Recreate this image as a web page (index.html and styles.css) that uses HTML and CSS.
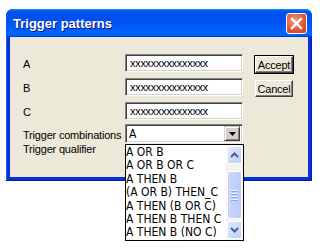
FILE: index.html
```
<!DOCTYPE html>
<html>
<head>
    <title>Trigger patterns</title>
    <link rel="stylesheet" href="styles.css">
</head>
<body>
    <div class="window">
        <div class="titlebar">
            <span class="title">Trigger patterns</span>
            <span class="close">
                <svg width="13" height="13" viewBox="0 0 13 13">
                    <path d="M2 2 L11 11 M11 2 L2 11" stroke="#fff" stroke-width="2.4" stroke-linecap="square"/>
                </svg>
            </span>
        </div>
        <div class="client">
            <div class="form">
                <div class="row">
                    <label>A</label>
                    <div class="field">xxxxxxxxxxxxxxx</div>
                </div>
                <div class="row">
                    <label>B</label>
                    <div class="field">xxxxxxxxxxxxxxx</div>
                </div>
                <div class="row">
                    <label>C</label>
                    <div class="field">xxxxxxxxxxxxxxx</div>
                </div>
                <div class="row row-combo">
                    <label>Trigger combinations</label>
                    <div class="combo">
                        <span class="combo-value">A</span>
                        <span class="combo-btn">
                            <svg width="7" height="4" viewBox="0 0 7 4"><path d="M0 0 H7 L3.5 4 Z" fill="#000"/></svg>
                        </span>
                        <div class="dropdown">
                            <ul class="items">
                                <li>A OR B</li>
                                <li>A OR B OR C</li>
                                <li>A THEN B</li>
                                <li>(A OR B) THEN_C</li>
                                <li>A THEN (B OR C)</li>
                                <li>A THEN B THEN C</li>
                                <li>A THEN B (NO C)</li>
                            </ul>
                            <div class="scrollbar">
                                <div class="sb-btn">
                                    <svg width="9" height="6" viewBox="0 0 9 6"><path d="M1 5 L4.5 1.5 L8 5" fill="none" stroke="#4d6185" stroke-width="2"/></svg>
                                </div>
                                <div class="sb-track">
                                    <div class="sb-thumb">
                                        <span class="grip"></span>
                                        <span class="grip"></span>
                                        <span class="grip"></span>
                                        <span class="grip"></span>
                                    </div>
                                </div>
                                <div class="sb-btn">
                                    <svg width="9" height="6" viewBox="0 0 9 6"><path d="M1 1 L4.5 4.5 L8 1" fill="none" stroke="#4d6185" stroke-width="2"/></svg>
                                </div>
                            </div>
                        </div>
                    </div>
                </div>
                <div class="row row-qualifier">
                    <label>Trigger qualifier</label>
                </div>
            </div>
            <div class="buttons">
                <button type="button" class="btn btn-default">Accept</button>
                <button type="button" class="btn">Cancel</button>
            </div>
        </div>
    </div>
</body>
</html>
```

FILE: styles.css
```
html, body {
    min-height: 100%;
}

body {
    margin: 0;
    min-height: 251px;
    background: #fff;
    font-family: "Liberation Sans", Arial, sans-serif;
    font-size: 11px;
    color: #000;
    overflow: visible;
}

.window {
    width: 306px;
    margin: 9px 0 0 6px;
    background: #0831d9;
    border-radius: 7px 7px 0 0;
    padding: 0 4px 4px 4px;
    box-sizing: border-box;
    box-shadow: inset -1px -1px #001ea0, inset 1px 0 #166aee;
}

.titlebar {
    height: 28px;
    margin: 0 -4px;
    padding: 0 5px 0 7px;
    display: flex;
    align-items: center;
    justify-content: space-between;
    border-radius: 7px 7px 0 0;
    background: linear-gradient(180deg, #0997ff, #0053ee 8%, #0050ee 40%, #0066ff 88%, #0066ff 93%, #005bff 95%, #003dd7 96%, #003dd7);
}

.title {
    color: #fff;
    font-weight: bold;
    font-size: 13px;
    text-shadow: 1px 1px #0f1089;
    padding-top: 1px;
}

.close {
    width: 19px;
    height: 19px;
    border: 1px solid #fff;
    border-radius: 3px;
    background: radial-gradient(circle at 40% 35%, #f0a080 0, #e15a34 55%, #c8401f 100%);
    display: flex;
    align-items: center;
    justify-content: center;
}

.client {
    height: 140px;
    background: #ece9d8;
    display: flex;
    padding: 17px 0 0 13px;
    box-sizing: border-box;
}

.form {
    width: 220px;
}

.row {
    display: flex;
    align-items: center;
    height: 18px;
    margin-bottom: 6px;
}

.row label {
    width: 102px;
    flex-shrink: 0;
    white-space: nowrap;
    letter-spacing: -0.2px;
    padding-top: 2px;
}

.row-combo {
    height: 19px;
    margin-top: -2px;
    margin-bottom: 0;
}

.row-qualifier {
    height: 12px;
    margin-top: -1px;
}

.field {
    width: 118px;
    height: 18px;
    box-sizing: border-box;
    background: #fff;
    border: 1px solid;
    border-color: #808080 #fff #fff #808080;
    box-shadow: inset 1px 1px #404040, inset -1px -1px #d4d0c8;
    padding: 3px 0 0 4px;
    line-height: 11px;
    letter-spacing: -0.3px;
}

.combo {
    position: relative;
    width: 118px;
    height: 19px;
    box-sizing: border-box;
    background: #fff;
    border: 1px solid;
    border-color: #808080 #fff #fff #808080;
    box-shadow: inset 1px 1px #404040, inset -1px -1px #d4d0c8;
    display: flex;
    align-items: center;
    justify-content: space-between;
    padding: 2px 2px 2px 3px;
}

.combo-value {
    font-family: "Liberation Sans Narrow", "DejaVu Sans Condensed", "Liberation Sans", sans-serif;
    font-size: 12px;
}

.combo-btn {
    width: 16px;
    height: 15px;
    box-sizing: border-box;
    background: #d4d0c8;
    border: 1px solid;
    border-color: #d4d0c8 #404040 #404040 #d4d0c8;
    box-shadow: inset 1px 1px #fff, inset -1px -1px #808080;
    display: flex;
    align-items: center;
    justify-content: center;
}

.dropdown {
    position: absolute;
    z-index: 5;
    top: 19px;
    left: -1px;
    width: 119px;
    height: 97px;
    box-sizing: border-box;
    background: #fff;
    border: 1px solid #000;
    display: flex;
}

.items {
    flex: 1;
    list-style: none;
    margin: 0;
    padding: 1px 0 0 0;
    font-family: "Liberation Sans Narrow", "DejaVu Sans Condensed", "Liberation Sans", sans-serif;
    font-size: 12px;
    line-height: 13.4px;
    white-space: nowrap;
}

.scrollbar {
    width: 17px;
    display: flex;
    flex-direction: column;
    background: #f4f3ee;
    padding: 1px 0 1px 0;
}

.sb-btn {
    height: 16px;
    margin: 0 1px;
    border: 1px solid #fff;
    border-radius: 2px;
    background: linear-gradient(135deg, #e0e9fd, #bccefa);
    display: flex;
    align-items: center;
    justify-content: center;
}

.sb-track {
    flex: 1;
    padding: 7px 0 2px 0;
    display: flex;
}

.sb-thumb {
    flex: 1;
    margin: 0 1px;
    border: 1px solid #fff;
    border-radius: 2px;
    background: linear-gradient(90deg, #c9d8fc, #b8cbf9);
    display: flex;
    flex-direction: column;
    align-items: center;
    justify-content: center;
    gap: 1px;
}

.grip {
    width: 7px;
    height: 1px;
    background: #eef3fe;
    border-bottom: 1px solid #8ca6e6;
}

.buttons {
    display: flex;
    flex-direction: column;
    gap: 7px;
    margin-left: 12px;
    padding-top: 2px;
}

.btn {
    width: 38px;
    height: 17px;
    padding: 0;
    font-family: "Liberation Sans", Arial, sans-serif;
    font-size: 11px;
    letter-spacing: -0.2px;
    color: #000;
    background: #ece9d8;
    border: 1px solid;
    border-color: #fff #404040 #404040 #fff;
    box-shadow: inset -1px -1px #808080;
}

.btn-default {
    outline: 1px solid #000;
}
```
